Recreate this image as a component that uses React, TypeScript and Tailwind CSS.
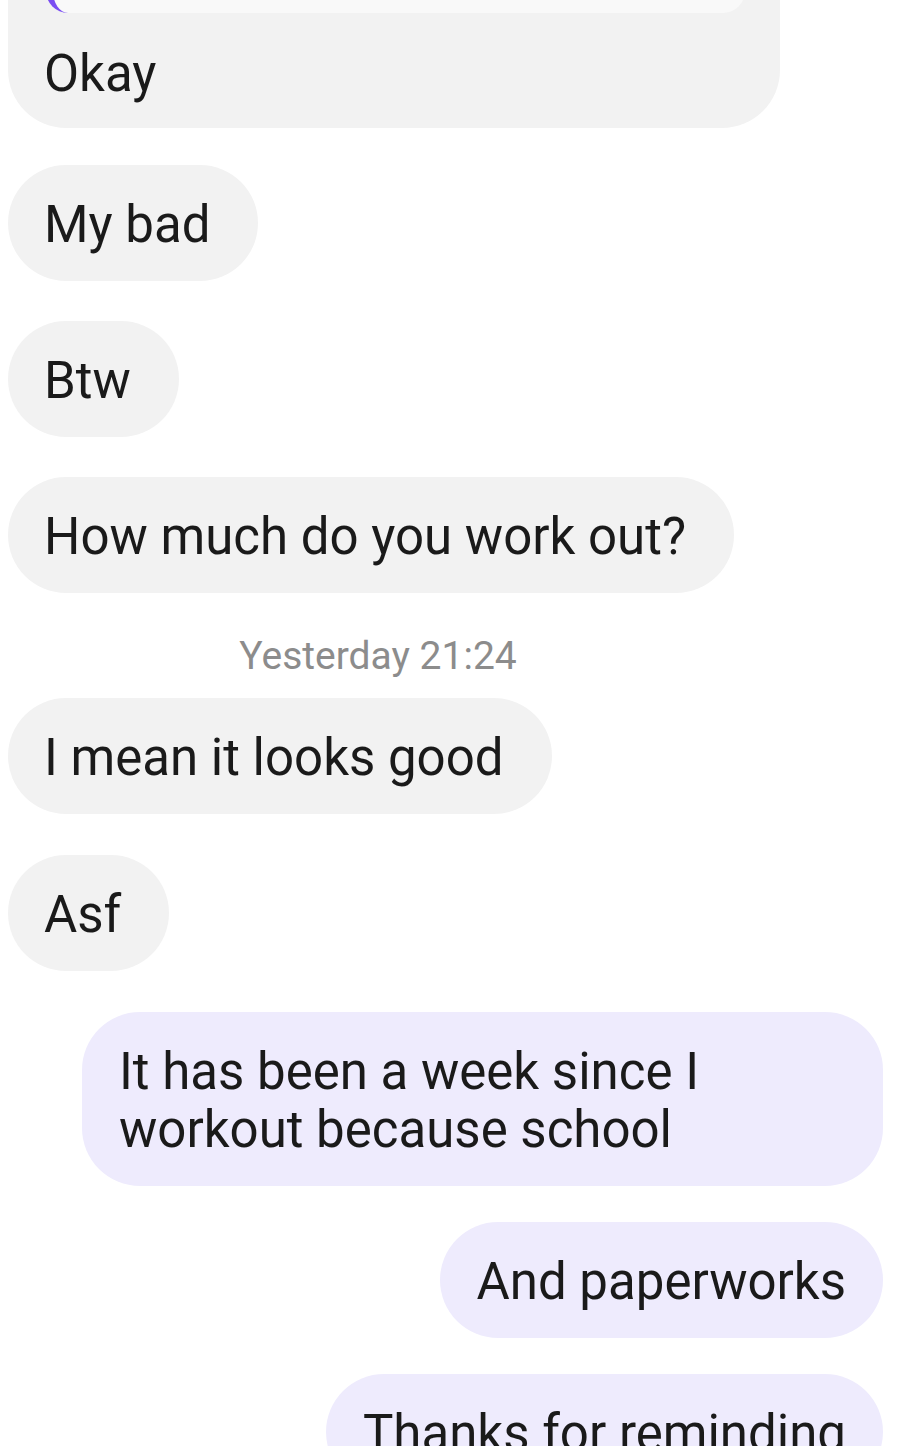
export default function App() {
  const received = "rounded-[58px] bg-[#f2f2f2] pl-9 pr-12 pt-[31px] pb-[27px] text-[51px] leading-[58px] text-[#1a1a1a]";
  const sent = "rounded-[58px] bg-[#eeebfd] px-[37px] pt-[31px] pb-[27px] text-[51px] leading-[58px] text-[#1a1a1a]";

  return (
    <div className="h-[1446px] w-[918px] overflow-hidden bg-white font-['Roboto',sans-serif]">
      <div className="flex flex-col px-2">
        {/* reply bubble, top cut off */}
        <div className="-mt-[120px] w-[772px] rounded-[58px] bg-[#f2f2f2] pb-[25px]">
          <div className="ml-[38px] mr-[35px] mt-[20px] h-[113px] rounded-[22px] border-l-[7px] border-[#7a4df2] bg-[#f9f9f9]" />
          <div className="mt-[32px] pl-9 text-[51px] leading-[58px] text-[#1a1a1a]">Okay</div>
        </div>

        <div className="mt-[37px] flex flex-col items-start gap-[40px]">
          <div className={received}>My bad</div>
          <div className={received}>Btw</div>
          <div className={received}>How much do you work out?</div>
        </div>

        <div className="mt-[41px] pr-[162px] text-center text-[39px] leading-[44px] text-[#8c8c8c]">Yesterday 21:24</div>

        <div className="mt-[20px] flex flex-col items-start gap-[41px]">
          <div className={received}>I mean it looks good</div>
          <div className={received}>Asf</div>
        </div>

        <div className="mt-[41px] flex flex-col items-end gap-[36px] pr-[27px]">
          <div className={sent + " w-[801px]"}>It has been a week since I workout because school</div>
          <div className={sent}>And paperworks</div>
          <div className={sent}>Thanks for reminding</div>
        </div>
      </div>
    </div>
  );
}
